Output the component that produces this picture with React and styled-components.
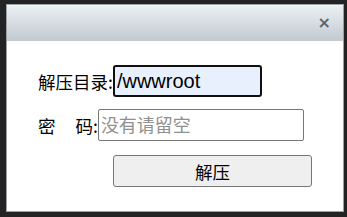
import React from "react";
import styled, { createGlobalStyle } from "styled-components";

const Global = createGlobalStyle`
  body {
    margin: 0;
    background: #232323;
    font-family: "Noto Sans CJK SC", "Noto Sans", sans-serif;
  }
`;

const Dialog = styled.div`
  margin: 4px 0 0 6px;
  width: 338px;
  height: 208px;
  box-sizing: border-box;
  background: #fff;
  border: 1px solid #9aa0a5;
  display: flex;
  flex-direction: column;
`;

const TitleBar = styled.div`
  height: 35px;
  flex: none;
  background: linear-gradient(#eaeff2, #c2c9cf);
  border-top: 1px solid #f6f8f9;
  display: flex;
  align-items: center;
  justify-content: flex-end;
  padding-right: 12px;
`;

const Close = styled.span`
  color: #596470;
  font-family: "DejaVu Sans", sans-serif;
  font-size: 16px;
  font-weight: bold;
  line-height: 1;
  margin-top: -2px;
`;

const Body = styled.div`
  padding: 24px 0 0 31px;
  display: flex;
  flex-direction: column;
`;

const Row = styled.div`
  display: flex;
  align-items: center;
  height: 32px;
  margin-bottom: ${(p) => p.$gap || 12}px;
  font-size: 17.5px;
  color: #000;
`;

const Label = styled.span`
  white-space: pre;
`;

const Gap = styled.span`
  display: inline-block;
  width: ${(p) => p.$w}px;
`;

const Input = styled.input`
  box-sizing: border-box;
  width: ${(p) => p.$w}px;
  height: 32px;
  margin: 0;
  padding: 0 2px;
  font-family: "Liberation Sans", "Noto Sans CJK SC", sans-serif;
  font-size: 20px;
  color: #000;
  outline: none;
  background: ${(p) => (p.$focus ? "#e8f0fe" : "#fff")};
  border: ${(p) => (p.$focus ? "2px solid #101010" : "1px solid #767676")};
  border-radius: ${(p) => (p.$focus ? 3 : 2)}px;
  &::placeholder {
    color: #909090;
    font-family: "Noto Sans CJK SC", sans-serif;
    font-size: 18px;
  }
`;

const Button = styled.button`
  box-sizing: border-box;
  margin-left: 75px;
  width: 199px;
  height: 32px;
  background: #efefef;
  border: 1px solid #767676;
  border-radius: 3px;
  font-family: "Noto Sans CJK SC", sans-serif;
  font-size: 17.5px;
  color: #000;
  padding: 0;
`;

export default function App() {
  return (
    <>
      <Global />
      <Dialog>
        <TitleBar>
          <Close>×</Close>
        </TitleBar>
        <Body>
          <Row>
            <Label>解压目录:</Label>
            <Input $focus $w={149} defaultValue="/wwwroot" />
          </Row>
          <Row $gap={14}>
            <Label>
              密<Gap $w={20} />码:
            </Label>
            <Input $w={206} placeholder="没有请留空" />
          </Row>
          <Button>解压</Button>
        </Body>
      </Dialog>
    </>
  );
}
